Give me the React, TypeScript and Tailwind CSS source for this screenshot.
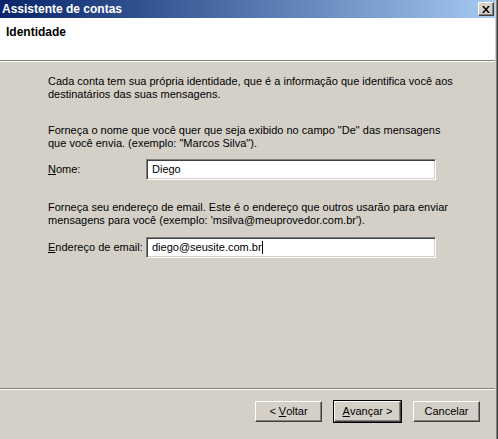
import React from "react"

const raised =
  "bg-[#d4d0c8] border border-t-white border-l-white border-r-[#404040] border-b-[#404040] shadow-[inset_-1px_-1px_0_#808080]"

const sunken =
  "bg-white border border-t-[#808080] border-l-[#808080] border-r-white border-b-white shadow-[inset_1px_1px_0_#404040,inset_-1px_-1px_0_#d4d0c8]"

function Field({ value, caret }: { value: string; caret?: boolean }) {
  return (
    <div className={`${sunken} w-[290px] h-[21px] flex items-center pl-[5px]`}>
      <span>{value}</span>
      {caret && <span className="w-px h-[13px] bg-black" />}
    </div>
  )
}

function Btn({ children, primary }: { children: React.ReactNode; primary?: boolean }) {
  return (
    <div className={primary ? "border border-black" : "border border-transparent"}>
      <div className={`${raised} w-[67px] h-[21px] flex items-center justify-center whitespace-pre`}>{children}</div>
    </div>
  )
}

export default function App() {
  return (
    <div className="w-[498px] h-[439px] flex bg-[#d4d0c8] text-black text-[11px] leading-[13px] font-['Liberation_Sans',Arial,sans-serif] overflow-hidden">
      <div className="w-[495px] flex flex-col">
        {/* title bar */}
        <div className="h-[18px] flex items-center justify-between pl-[2px] pr-[1px] bg-gradient-to-r from-[#0a246a] to-[#a6caf0]">
          <span className="text-white font-bold text-[12px]">Assistente de contas</span>
          <div className={`${raised} w-[16px] h-[14px] flex items-center justify-center`}>
            <svg width="8" height="7" viewBox="0 0 8 7">
              <path d="M0 0h2l2 2.5L6 0h2L5 3.5 8 7H6L4 4.5 2 7H0l3-3.5z" fill="#000" />
            </svg>
          </div>
        </div>

        {/* header */}
        <div className="h-[43px] bg-white pl-[6px] pt-[8px] font-bold text-[12px] border-b border-b-[#808080]">
          Identidade
        </div>
        <div className="h-px bg-white" />

        {/* body */}
        <div className="flex-1 flex flex-col pl-[48px] pt-[13px]">
          <p>
            Cada conta tem sua própria identidade, que é a informação que identifica você aos
            <br />
            destinatários das suas mensagens.
          </p>
          <p className="mt-[23px]">
            Forneça o nome que você quer que seja exibido no campo "De" das mensagens
            <br />
            que você envia. (exemplo: "Marcos Silva").
          </p>
          <div className="mt-[9px] flex items-center">
            <span className="w-[98px]">
              <u>N</u>ome:
            </span>
            <Field value="Diego" />
          </div>
          <p className="mt-[21px]">
            Forneça seu endereço de email. Este é o endereço que outros usarão para enviar
            <br />
            mensagens para você (exemplo: 'msilva@meuprovedor.com.br').
          </p>
          <div className="mt-[10px] flex items-center">
            <span className="w-[98px]">
              <u>E</u>ndereço de email:
            </span>
            <Field value="diego@seusite.com.br" caret />
          </div>
        </div>

        {/* footer */}
        <div className="h-[51px] border-t border-t-[#808080]">
          <div className="h-full border-t border-t-white flex justify-end items-start gap-[10px] pt-[10px] pr-[14px]">
            <Btn>
              {"< "}
              <u>V</u>oltar
            </Btn>
            <Btn primary>
              <u>A</u>vançar{" >"}
            </Btn>
            <Btn>Cancelar</Btn>
          </div>
        </div>
      </div>
      <div className="w-[3px] flex">
        <div className="w-px bg-[#d4d0c8]" />
        <div className="w-px bg-[#808080]" />
        <div className="w-px bg-[#404040]" />
      </div>
    </div>
  )
}
